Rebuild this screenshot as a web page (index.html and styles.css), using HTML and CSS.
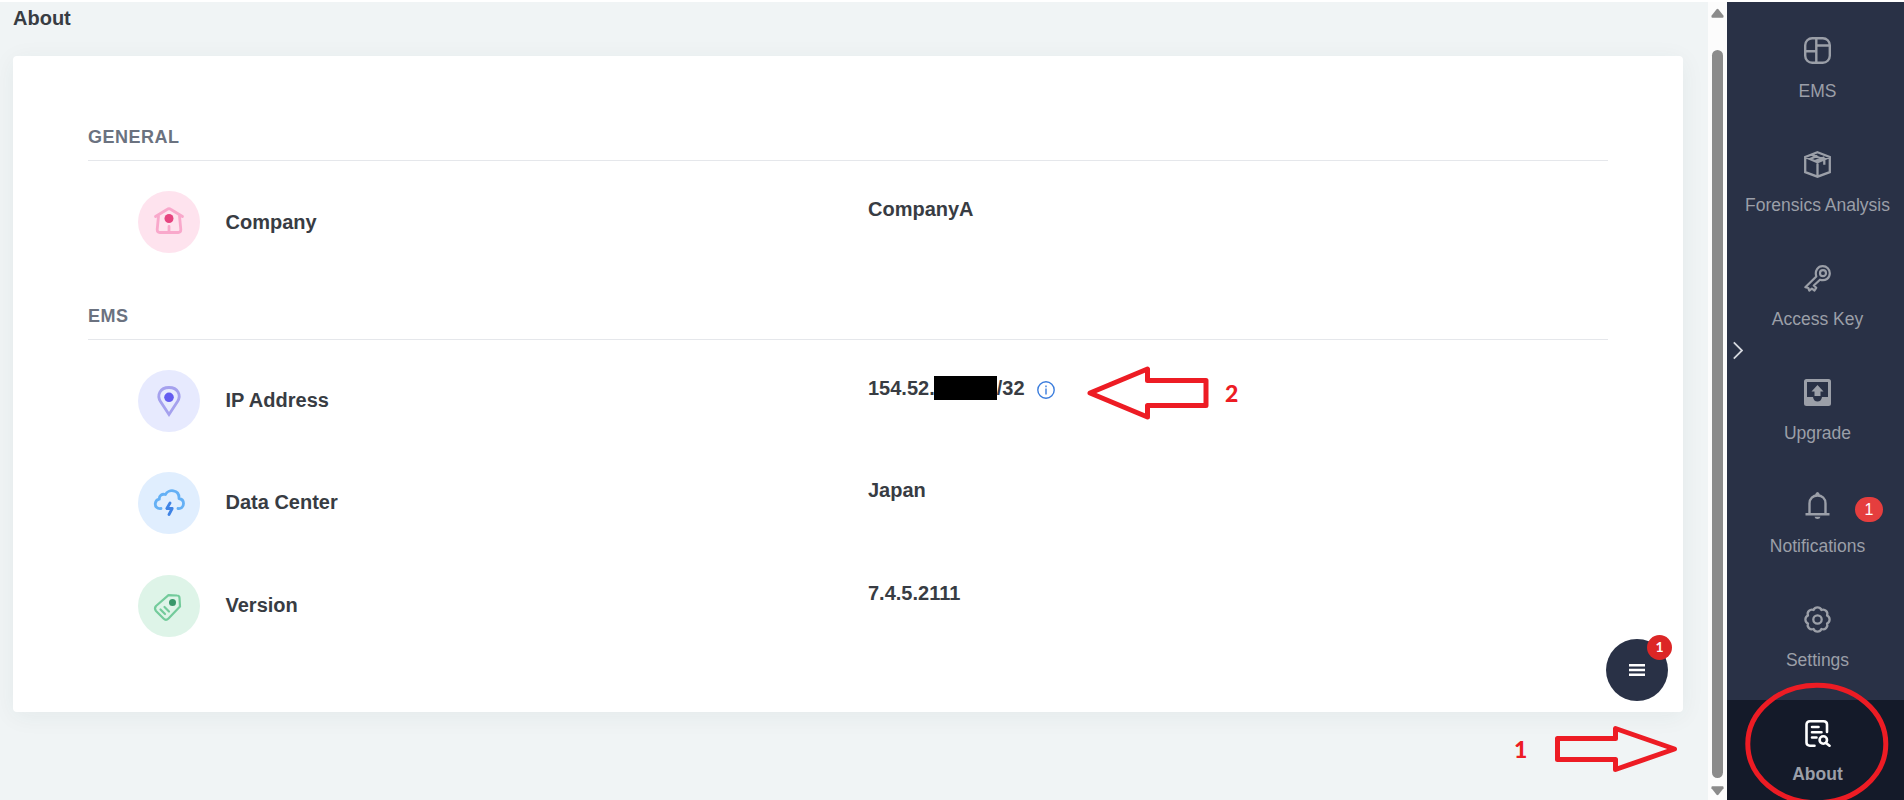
FILE: index.html
```html
<!DOCTYPE html>
<html lang="en">
<head>
<meta charset="utf-8">
<title>About</title>
<link rel="stylesheet" href="styles.css">
</head>
<body>
<div class="app">
  <main class="main">
    <h1 class="page-title">About</h1>
    <div class="card">
      <section class="section">
        <h2 class="section-title">GENERAL</h2>
        <div class="row">
          <span class="disc pink"><svg viewBox="0 0 62 62" fill="none" stroke="#f9a8cb" stroke-width="2.800" stroke-linecap="round" stroke-linejoin="round"><path d="M17.500 25.500 29 18.500q2-1.500 4 0l11.500 7M20.500 25l-1.300 13.500q0 3 2.500 3h18.600q2.500 0 2.500-3L41.500 25M31 35.500v5"/><circle cx="31" cy="27.500" r="4.500" fill="#e64480" stroke="none"/></svg></span>
          <span class="label">Company</span>
          <span class="value">CompanyA</span>
        </div>
      </section>
      <section class="section">
        <h2 class="section-title">EMS</h2>
        <div class="row">
          <span class="disc violet"><svg viewBox="0 0 62 62" fill="none" stroke="#a5a1ee" stroke-width="2.800"><path d="M31 44.500 22.500 31.500C18.500 25 22 17.500 31 17.500S43.500 25 39.500 31.500Z"/><circle cx="31" cy="27.300" r="4.800" fill="#645cf0" stroke="none"/></svg></span>
          <span class="label">IP Address</span>
          <span class="value">154.52.<i class="redacted"></i>/32<svg class="info" viewBox="0 0 18 18" fill="none" stroke="#3b7ddd" stroke-width="1.400"><circle cx="9" cy="9" r="8.200"/><path d="M9 7.500v6M9 4.500v1.700"/></svg></span>
        </div>
        <div class="row">
          <span class="disc blue"><svg viewBox="0 0 62 62" fill="none" stroke="#64b0f5" stroke-width="2.800" stroke-linecap="round" stroke-linejoin="round"><path d="M23 36.500C19 37 17 34.500 17.300 31.500c.3-2.500 2-4 4-4.300C21 23.500 24 21.500 27.500 22.500 30 17 41.500 17 41 26.500c3 .5 4.500 2.500 4.500 5 0 3.500-2.500 5.500-5.500 5"/><path stroke="#3f83e5" d="M32 31 28.800 36.500h5.400L31 42.500"/></svg></span>
          <span class="label">Data Center</span>
          <span class="value">Japan</span>
        </div>
        <div class="row">
          <span class="disc green"><svg viewBox="0 0 62 62" fill="none" stroke="#73cb9b" stroke-width="2.200" stroke-linecap="round" stroke-linejoin="round"><path d="M30.500 20.200 39 20.500q2.500 0 2.500 2.500l.5 8.500-11.500 12q-2.500 2.500-5 0l-7.500-7.500q-2-2.500 0-5ZM22.500 34.500l4.500 4.500M26.500 32l4.500 4.500"/><circle cx="34.500" cy="27.500" r="3.500" fill="#38976a" stroke="none"/></svg></span>
          <span class="label">Version</span>
          <span class="value">7.4.5.2111</span>
        </div>
      </section>
    </div>
  </main>
  <div class="scrollbar">
    <svg viewBox="0 0 14 10"><path d="M6 1q1-1 2 0l5.500 7q.5 2-1 2h-11Q0 10 .5 8Z"/></svg>
    <div class="thumb"></div>
    <svg class="down" viewBox="0 0 14 10"><path d="M6 1q1-1 2 0l5.500 7q.5 2-1 2h-11Q0 10 .5 8Z"/></svg>
  </div>
  <nav class="sidebar">
    <a class="nav"><svg viewBox="0 0 27 27" fill="none" stroke="currentColor" stroke-width="2.400"><rect x="1.200" y="1.200" width="24.600" height="24.600" rx="7"/><path d="M12.300 1v25M1 14.200h11.300M12.300 8.500H26"/></svg>EMS</a>
    <a class="nav"><svg viewBox="0 0 27 27" fill="none" stroke="currentColor" stroke-width="2.300"><path d="M13.500 1.300 25.800 6v15.200l-12.300 4.500L1.200 21.200V6ZM1.200 6l12.300 5.200L25.800 6M13.500 11v15M7.500 3.800l12.800 5v5M5.500 8.200 13.500 4.800M11 10 20.500 6.200"/></svg>Forensics Analysis</a>
    <a class="nav"><svg viewBox="0 0 27 27" fill="none" stroke="currentColor" stroke-width="2.200" stroke-linejoin="round"><path d="M12.300 11.500C10.500 5.500 14 1.200 18.800 1.200c4 0 7 3 7 7 0 5-4.500 8.300-9.800 6.500L9.800 20.500l2.400 2.300-1.700 2.700-2.600-1.800-2.600 2-1-2.700-3-.8Z"/><circle cx="19" cy="8.200" r="3"/></svg>Access Key</a>
    <a class="nav"><svg viewBox="0 0 27 27" fill="currentColor"><path fill-rule="evenodd" d="M2.500 0h22Q27 0 27 2.500v22q0 2.500-2.500 2.500h-22Q0 27 0 24.500v-22Q0 0 2.500 0ZM3 3v15h6q.8 4.500 4.500 4.500T18 18h6V3Z"/><path d="m13.500 6 6 6.500h-3V17h-6v-4.500h-3Z"/></svg>Upgrade</a>
    <a class="nav"><svg viewBox="0 0 27 27" fill="none" stroke="currentColor" stroke-width="2.400"><path d="M1.500 22.300h24M5.500 22V11.500C5.500 6.500 9 3.500 13.500 3.500s8 3 8 8V22"/><path stroke="none" fill="currentColor" d="M11.300 3.500V2q2.200-4 4.400 0v1.500ZM10.500 24.800h6q-.5 2.200-3 2.200t-3-2.200Z"/></svg>Notifications<b class="count">1</b></a>
    <a class="nav"><svg viewBox="0 0 27 27" fill="none" stroke="currentColor" stroke-width="2.300" stroke-linejoin="round"><path d="M23.020 17.440A4.300 4.300 0 0 1 17.440 23.020 4.300 4.300 0 0 1 9.560 23.020 4.300 4.300 0 0 1 3.980 17.440 4.300 4.300 0 0 1 3.980 9.560 4.300 4.300 0 0 1 9.560 3.980 4.300 4.300 0 0 1 17.440 3.980 4.300 4.300 0 0 1 23.020 9.560 4.300 4.300 0 0 1 23.020 17.440Z"/><circle cx="13.500" cy="13.500" r="4.200"/></svg>Settings</a>
    <a class="nav active"><svg viewBox="0 0 27 27" fill="none" stroke="#fff" stroke-width="2.600" stroke-linecap="round"><path d="M10.500 25.700H6Q2.500 25.700 2.500 22.500v-18Q2.500 1.300 6 1.300h13.500q3.500 0 3.500 3.200v7.500M8 7h6.500M8 12.200h9.500M8 17.500h4.500M22 23l3.500 2.800"/><circle cx="19.300" cy="20" r="3.700"/></svg>About</a>
    <svg class="expand" viewBox="0 0 10 18" fill="none" stroke="#d5d8de" stroke-width="1.800"><path d="m.8.8 8.200 8.200-8.200 8.200"/></svg>
  </nav>
</div>
<button class="fab"><svg viewBox="0 0 16 12" fill="#fff"><path d="M0 0h16v2.500H0ZM0 4.700h16v2.500H0ZM0 9.400h16v2.500H0Z"/></svg><b class="fab-count">1</b></button>
<div class="notes">
  <svg viewBox="0 0 1904 800" fill="none" stroke="#ed1c24" stroke-width="5" stroke-linejoin="round"><path d="M1090 393 1147.500 369v11.500h58.500v25h-58.500V417ZM1674.500 749l-59-20.500v10H1557.500v21h58v10Z"/><ellipse cx="1816.800" cy="744" rx="69" ry="58.700"/></svg>
  <span class="note one">1</span>
  <span class="note two">2</span>
</div>
</body>
</html>
```
FILE: styles.css
```css
* { box-sizing: border-box; }
body {
  margin: 0;
  height: 800px;
  overflow: hidden;
  position: relative;
  font-family: "Liberation Sans", Arial, sans-serif;
  color: #383c43;
  background: #fff;
}
svg { display: block; }
.app { display: flex; height: 800px; padding-top: 2px; }
.main { width: 1708px; padding: 4px 25px 0 13px; background: #f0f4f5; }
.page-title { margin: 0 0 26px; font-size: 20px; line-height: 24px; font-weight: 700; }
.card {
  height: 656px;
  padding: 68px 75px 0;
  background: #fff;
  border-radius: 4px;
  box-shadow: 0 4px 24px rgba(40, 60, 60, .06);
}
.section { height: 179px; }
.section-title {
  margin: 0 0 30px;
  height: 37px;
  font-size: 18px;
  line-height: 26px;
  letter-spacing: .5px;
  color: #6b7280;
  border-bottom: 1px solid #e5e7eb;
}
.row {
  display: grid;
  grid-template-columns: 87.5px 642.5px 1fr;
  padding-left: 50px;
  height: 102.4px;
  font-size: 20px;
  line-height: 24px;
  font-weight: 700;
}
.disc { width: 62px; height: 62px; border-radius: 50%; }
.pink { background: #fee3ee; }
.violet { background: #e7eafe; }
.blue { background: #e0eefe; }
.green { background: #def4e8; }
.label { padding-top: 19px; }
.section + .section .label { padding-top: 18px; }
.value { display: flex; padding-top: 6px; }
.redacted { width: 63px; height: 24px; margin-left: -1px; background: #000; }
.info { width: 18px; height: 18px; margin: 5px 0 0 12px; }

.scrollbar {
  width: 19px;
  padding: 6px 0 4px 3px;
  display: flex;
  flex-direction: column;
  background: #fcfcfc;
  fill: #8b8b8b;
}
.scrollbar svg { width: 13px; height: 10px; }
.scrollbar .down { transform: rotate(180deg); }
.thumb { flex: 1; width: 11px; margin: 32px 0 8px 1px; border-radius: 6px; background: #8b8b8b; }

.sidebar { position: relative; width: 177px; padding-top: 15.2px; background: #293146; overflow: hidden; }
.nav {
  position: relative;
  display: flex;
  flex-direction: column;
  align-items: center;
  gap: 17px;
  height: 113.8px;
  padding: 20px 0 0 4px;
  font-size: 17.5px;
  line-height: 20px;
  white-space: nowrap;
  color: #9b9fa8;
}
.nav svg { width: 27px; height: 27px; flex: none; }
.active { background: #141a29; font-weight: 700; }
.count {
  position: absolute;
  left: 128px;
  top: 25px;
  width: 28px;
  height: 25px;
  border-radius: 13px;
  background: #e53e3e;
  color: #fff;
  font-size: 16px;
  line-height: 25px;
  font-weight: 400;
  text-align: center;
}
.expand { position: absolute; left: 6px; top: 339px; width: 10px; height: 19px; }

.fab {
  position: absolute;
  left: 1606px;
  top: 639px;
  width: 62px;
  height: 62px;
  padding: 0;
  border: 0;
  border-radius: 50%;
  background: #293146;
}
.fab svg { width: 16px; height: 12px; margin: 0 auto; }
.fab-count {
  position: absolute;
  left: 41px;
  top: -4px;
  width: 25px;
  height: 25px;
  border-radius: 50%;
  background: #dc2626;
  color: #fff;
  font: 700 14px/23px Lato, sans-serif;
}
.notes { position: absolute; inset: 0; overflow: hidden; pointer-events: none; }
.note { position: absolute; color: #ed1c24; font: 900 23px/30px Lato, sans-serif; }
.one { left: 1514px; top: 734px; }
.two { left: 1225px; top: 378px; }
```
